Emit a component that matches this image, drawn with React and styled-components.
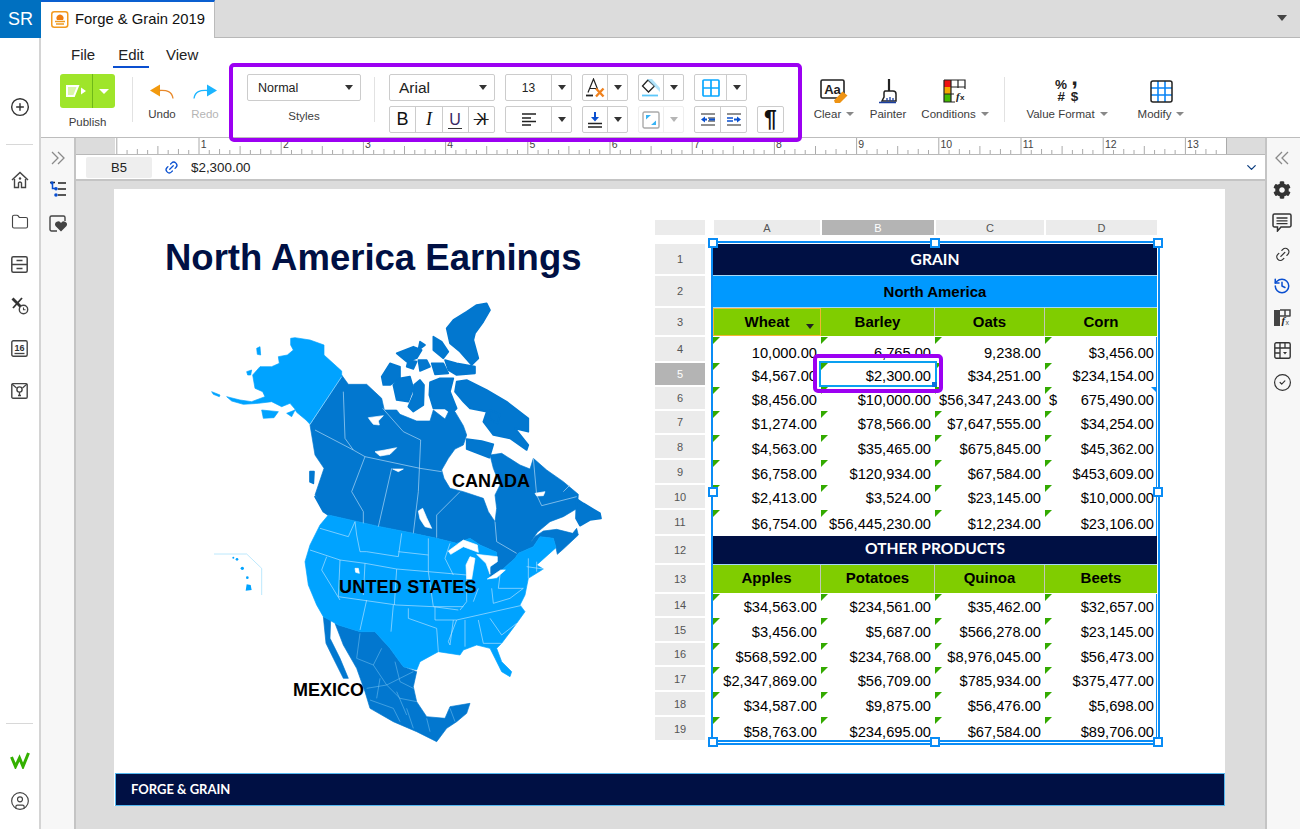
import React from "react";
import styled, { createGlobalStyle } from "styled-components";
import { FaCog } from "react-icons/fa";
import { History, CircleCheck, CircleUser, Link2, CirclePlus, Folder, ChevronDown } from "lucide-react";

const Global = createGlobalStyle`
  html, body { margin: 0; padding: 0; background: #fff; }
  body { font-family: "Liberation Sans", Arial, sans-serif; color: #222; overflow: hidden; }
  * { box-sizing: border-box; }
  svg { display: block; }
`;

const Shell = styled.div`display: flex; width: 1300px; height: 829px; overflow: hidden;`;
const Rail = styled.aside`width: 41px; flex: none; display: flex; flex-direction: column; background: #fff; border-right: 2px solid #d4d4d4;`;
const Brand = styled.div`height: 38px; width: 41px; background: #0070c0; color: #fff; font-size: 18px; display: flex; align-items: center; justify-content: center;`;
const RailButton = styled.div`height: ${p => p.$h || 42}px; margin-top: ${p => p.$mt || 0}px; display: flex; align-items: center; justify-content: center; color: #444;`;
const RailRule = styled.div`height: 1px; background: #d8d8d8; margin: ${p => p.$m}; `;
const RailFoot = styled.div`margin-top: auto; padding-bottom: 8px;`;

const Main = styled.div`flex: 1; min-width: 0; display: flex; flex-direction: column;`;
const TabBar = styled.div`height: 38px; flex: none; background: #dcdcdc; border-bottom: 1px solid #b8b8b8; display: flex; align-items: flex-start; justify-content: space-between; padding-right: 13px;`;
const Tab = styled.div`width: 174px; height: 38px; background: #fff; border-top: 2px solid #0a5fd0; border-right: 1px solid #bbb; display: flex; align-items: center; gap: 6px; padding: 0 0 2px 10px; font-size: 14.8px; color: #111; white-space: nowrap;`;
const TabCaret = styled.div`margin-top: 15px; width: 0; height: 0; border-left: 5.5px solid transparent; border-right: 5.5px solid transparent; border-top: 6px solid #444;`;

const Toolbar = styled.div`position: relative; height: 100px; flex: none; background: #fff; border-bottom: 1px solid #bdbdbd; z-index: 3;`;
const MenuRow = styled.nav`height: 36px; display: flex; padding: 8px 0 0 25px; font-size: 15px; color: #222;`;
const MenuItem = styled.div`height: 22px; line-height: 18px; padding: 0 5px; margin-right: ${p => p.$mr}px; border-bottom: ${p => (p.$on ? "2px solid #0a4fd0" : "2px solid transparent")};`;
const Ribbon = styled.div`display: flex; align-items: flex-start; padding-left: 19px;`;
const PublishCol = styled.div`width: 55px; display: flex; flex-direction: column; align-items: center;`;
const PublishBtn = styled.div`width: 55px; height: 34px; border-radius: 3px; background: #9fe52a; display: flex;`;
const PublishMain = styled.div`width: 33px; border-right: 1px solid #6fb818; display: flex; align-items: center; justify-content: center;`;
const PublishDrop = styled.div`flex: 1; display: flex; align-items: center; justify-content: center;`;
const WhiteCaret = styled.span`width: 0; height: 0; border-left: 5px solid transparent; border-right: 5px solid transparent; border-top: 5px solid #fff;`;
const RibbonLabel = styled.div`font-size: 11.5px; line-height: 14px; color: ${p => p.$off ? "#b5b5b5" : "#3c3c3c"}; margin-top: ${p => p.$mt ?? 3}px; white-space: nowrap; display: flex; align-items: center; gap: 5px;`;
const Divider = styled.div`width: 1px; height: 45px; background: #e2e2e2; margin: 3px 0 0 ${p => p.$ml}px;`;
const RibbonItem = styled.div`width: ${p => p.$w}px; margin-left: ${p => p.$ml}px; padding-top: 4px; display: flex; flex-direction: column; align-items: center;`;
const IconBox = styled.div`height: 26px; display: flex; align-items: center; justify-content: center;`;
const GrayCaret = styled.span`width: 0; height: 0; border-left: 4.5px solid transparent; border-right: 4.5px solid transparent; border-top: 4.5px solid #888;`;
const StylesCol = styled.div`width: 114px; margin-left: 21px; display: flex; flex-direction: column; align-items: center;`;
const Select = styled.div`width: ${p => p.$w}px; height: 27px; border: 1px solid #ccc; border-radius: 2px; background: #fff; display: flex; align-items: center; justify-content: space-between; padding: 0 7px 0 ${p => p.$pl}px; font-size: ${p => p.$fs}px; color: #222;`;
const DarkCaret = styled.span`width: 0; height: 0; border-left: 4.5px solid transparent; border-right: 4.5px solid transparent; border-top: 5px solid ${p => p.$off ? "#b5b5b5" : "#333"};`;
const FormatCluster = styled.div`margin-left: 14px; display: flex; gap: 10px;`;
const FormatCol = styled.div`width: ${p => p.$w}px; display: flex; flex-direction: column; gap: 5px; justify-content: flex-end; height: 59px;`;
const Split = styled.div`height: 27px; display: flex; border: 1px solid ${p => p.$off ? "#eee" : "#ccc"}; border-radius: 2px; background: #fff;`;
const SplitMain = styled.div`flex: 1; display: flex; align-items: center; justify-content: center; font-size: 12px; color: #222;`;
const SplitDrop = styled.div`width: 20px; flex: none; border-left: 1px solid ${p => p.$off ? "#eee" : "#ccc"}; display: flex; align-items: center; justify-content: center;`;
const Cell = styled.div`flex: 1; display: flex; align-items: center; justify-content: center; color: #111; font-size: ${p => p.$fs || 18}px; font-family: ${p => p.$serif ? '"Liberation Serif", serif' : "inherit"}; font-style: ${p => p.$it ? "italic" : "normal"}; & + & { border-left: 1px solid #ccc; }`;
const UnderU = styled.span`font-size: 16px; line-height: 17px; border-bottom: 1.5px solid #333; color: #3a2a66; padding: 0 1px; `;
const StrikeK = styled.span`position: relative; font-size: 16px; line-height: 17px; transform: scaleX(-1); &::after { content: ""; position: absolute; left: -2px; right: -2px; top: 8px; height: 1px; background: #222; }`;
const Pilcrow = styled.div`height: 27px; border: 1px solid #ccc; border-radius: 2px; display: flex; align-items: center; justify-content: center; font-size: 23px; font-weight: 700; color: #111;`;
const FormatGlyphs = styled.div`display: grid; grid-template-columns: 15px 12px; line-height: 12.500px; font-size: 13.500px; font-weight: 700; color: #222; text-align: center;`;
const ThickComma = styled.span`font-size: 24px; line-height: 12px; font-weight: 700; transform: translateY(-8px);`;
const ItalicHash = styled.span`font-style: italic;`;
const Highlight = styled.div`position: absolute; left: 188px; top: 25px; width: 573px; height: 79px; border: 4px solid #9c00f2; border-radius: 5px; pointer-events: none;`;

const Work = styled.div`flex: 1; min-height: 0; display: flex;`;
const LeftPane = styled.div`width: 35px; flex: none; background: #f7f7f7; border-right: 2px solid #c4c4c4; display: flex; flex-direction: column; align-items: center; padding-top: 12px; color: #888;`;
const PaneIcon = styled.div`margin-top: ${p => p.$mt}px; height: ${p => p.$h}px; display: flex; align-items: center; justify-content: center;`;
const Center = styled.div`flex: 1; min-width: 0; display: flex; flex-direction: column;`;
const RulerRow = styled.div`height: 17px; flex: none; display: flex; background: #dcdcdc; border-bottom: 1px solid #b8b8b8;`;
const RulerGap = styled.div`width: 39px; flex: none;`;
const FormulaBar = styled.div`height: 26px; flex: none; background: #fff; border-bottom: 2px solid #c4c4c4; display: flex; align-items: center; padding: 1px 5px 0 10px; font-size: 13.4px; color: #222;`;
const CellRef = styled.div`width: 66px; height: 21px; background: #eee; border-radius: 2px; display: flex; align-items: center; justify-content: center; font-size: 13px;`;
const LinkWrap = styled.div`margin: 0 12px 0 12px; color: #0a50d0; transform: rotate(-45deg);`;
const FormulaEnd = styled.div`margin-left: auto; color: #0a3d80; margin-right: 1px;`;
const Canvas = styled.div`flex: 1; min-height: 0; background: #dcdcdc; padding: 8px 40px 23px 38px; display: flex;`;
const Page = styled.div`flex: 1; background: #fff; display: flex; flex-direction: column;`;
const PageBody = styled.div`flex: 1; min-height: 0; display: flex;`;
const MapCol = styled.div`width: 541px; flex: none;`;
const Title = styled.h1`margin: 49px 0 17px 51px; font-size: 36.5px; line-height: 40px; font-weight: 700; color: #001044; white-space: nowrap;`;
const MapBox = styled.div`position: relative; width: 420px; height: 450px; margin-left: 86px;`;
const MapLabel = styled.div`position: absolute; left: ${p => p.$x}px; top: ${p => p.$y}px; font-size: 18px; line-height: 20px; font-weight: 700; color: #000; white-space: nowrap; letter-spacing: ${p => p.$ls || 0}px;`;
const Sheet = styled.div`position: relative; margin-top: 31px; width: 510px; height: fit-content;`;
const ColHeads = styled.div`display: flex; margin-bottom: 9px; height: 15px;`;
const Corner = styled.div`width: 50px; background: #ebebeb; margin-right: 9px;`;
const ColHead = styled.div`width: ${p => p.$w}px; margin-right: 2px; background: ${p => p.$on ? "#b4b4b4" : "#ebebeb"}; color: ${p => p.$on ? "#fff" : "#555"}; font-size: 11px; line-height: 17px; text-align: center;`;
const Row = styled.div`display: flex; height: ${p => p.$h}px;`;
const RowHead = styled.div`width: 50px; flex: none; margin: 0 8px 2px 0; background: ${p => p.$on ? "#b4b4b4" : "#ebebeb"}; color: ${p => p.$on ? "#fff" : "#555"}; font-size: 11px; display: flex; align-items: center; justify-content: center;`;
const Band = styled.div`width: 444px; height: 100%; background: ${p => p.$bg}; color: ${p => p.$fg}; border-bottom: 1px solid #a6d8f5; padding-bottom: ${p => p.$pb || 0}px; display: flex; align-items: center; justify-content: center; font-family: ${p => p.$lato ? 'Lato, sans-serif' : 'inherit'}; font-weight: 700; font-size: ${p => p.$lato ? 15.6 : 15}px;`;
const widths = [108, 114, 110, 112];
const HeadCell = styled.div`position: relative; width: ${p => p.$w}px; height: calc(100% - 1px); background: #80cd00; border-right: 1px solid #c2c8b4; border: ${p => p.$sel ? "1.5px solid #f2b632" : ""}; padding-bottom: ${p => p.$pb}px; font-size: 15px; font-weight: 700; color: #000; display: flex; align-items: center; justify-content: center; &:last-child { border-right: none; }`;
const HeadCaret = styled.span`position: absolute; right: 6px; bottom: 6px; width: 0; height: 0; border-left: 4.5px solid transparent; border-right: 4.5px solid transparent; border-top: 5px solid #222;`;
const DataCell = styled.div`position: relative; width: ${p => p.$w}px; padding: ${p => p.$pt}px 4px 0 4px; font-size: 14.67px; color: #000; white-space: nowrap; display: flex; align-items: center; justify-content: ${p => p.$acct ? "space-between" : "flex-end"}; border-bottom: ${p => p.$last ? "2px solid #0a8cf5" : "none"};
  &::before { content: ""; position: absolute; left: 0; top: 0; width: 0; height: 0; border-top: 7px solid #33aa00; border-right: 7px solid transparent; z-index: 1; }
  &:first-of-type { box-shadow: inset 2px 0 0 #fff, inset 3px 0 0 #0a8cf5; }
  &:last-of-type { box-shadow: inset -1px 0 0 #0a8cf5; padding-right: 3px; }
`;
const CornerMark = styled.span`position: absolute; right: 1px; top: 0; width: 0; height: 0; border-top: 5px solid #0a8cf5; border-left: 5px solid transparent;`;
const Frame = styled.div`position: absolute; left: 56px; top: 21px; width: 449px; height: 504px; border: 2px solid #0a8cf5; pointer-events: none; z-index: 2;`;
const Handle = styled.span`position: absolute; left: ${p => p.$x}px; top: ${p => p.$y}px; width: 10px; height: 10px; background: #fff; border: 2px solid #0a8cf5;`;
const CellSelect = styled.div`position: absolute; left: 164px; top: 141px; width: 118px; height: 26px; border: 2px solid #0aa0f0; z-index: 2; pointer-events: none;`;
const FillDot = styled.span`position: absolute; right: -2px; bottom: -2px; width: 5px; height: 5px; background: #0a6fe0;`;
const CellPurple = styled.div`position: absolute; left: 158px; top: 134px; width: 130px; height: 39px; border: 4px solid #9c00f2; border-radius: 5px; z-index: 3; pointer-events: none;`;
const PageFooter = styled.footer`height: 33px; flex: none; margin-left: 1px; background: #001044; border: 1px solid #55b8f0; color: #fff; font-family: Lato, sans-serif; font-weight: 700; font-size: 13px; display: flex; align-items: center; padding: 0 0 1px 15px;`;
const RightPane = styled.div`width: 35px; flex: none; background: #f7f7f7; border-left: 2px solid #c4c4c4; padding: 4px 3px 0 0; display: flex; flex-direction: column; align-items: center; color: #333;`;
const RightIcon = styled.div`height: 32px; display: flex; align-items: center; justify-content: center;`;
const TiltedIcon = styled(RightIcon)`transform: rotate(-45deg);`;
const Arrow = styled.svg``;

/* ---------- icons ---------- */
const S = "#444";
const Ic = ({ w = 20, h = 20, vb, children }) => <Arrow width={w} height={h} viewBox={vb || `0 0 ${w} ${h}`} fill="none">{children}</Arrow>;

const TabIcon = () => (<Ic w={18} h={17}><rect x=".75" y=".75" width="16" height="15.5" rx="2.5" stroke="#f39a1e" strokeWidth="1.5" fill="#fff" /><path d="M6 9a3.5 3.5 0 1 1 6 0z" fill="#ef7c10" /><path d="M4 10.5h10M5 13h8" stroke="#ef9a20" strokeWidth="1.6" /></Ic>);
const Home = () => (<Ic w={18} h={18}><path d="M1 9 9 1.5 17 9" stroke={S} strokeWidth="1.5" /><path d="M3.5 8v8.5h4V12a1.6 1.6 0 0 1 3 0v4.5h4V8" stroke={S} strokeWidth="1.4" /><circle cx="9" cy="7.5" r="1.2" fill={S} /></Ic>);
const Drawer = () => (<Ic w={17} h={17}><rect x=".8" y=".8" width="15.4" height="15.4" rx="1.5" stroke={S} strokeWidth="1.5" /><path d="M1 8.5h15M5.5 4.6h6M5.5 12.4h6" stroke={S} strokeWidth="1.5" /></Ic>);
const Tasks = () => (<Ic w={18} h={18}><path d="M1.500 1.500 10 10" stroke="#333" strokeWidth="2.800" /><path d="M11 1 2 11" stroke="#333" strokeWidth="1.800" /><circle cx="12.500" cy="12.500" r="4.200" fill="#fff" stroke={S} strokeWidth="1.400" /><path d="M12.500 10.500v2.300h2" stroke={S} strokeWidth="1.100" /></Ic>);
const Calendar = () => (<Ic w={17} h={17}><rect x=".8" y=".8" width="15.4" height="15.4" rx="1.5" stroke={S} strokeWidth="1.4" /><path d="M3.5 13.5h10" stroke={S} strokeWidth="1.3" /><text x="8.5" y="10.8" textAnchor="middle" fontSize="9" fontWeight="700" fill="#333" fontFamily="Liberation Sans">16</text></Ic>);
const Idea = () => (<Ic w={17} h={17}><rect x=".8" y="1.6" width="15.4" height="14.6" rx="1.2" stroke={S} strokeWidth="1.4" /><path d="M1 2 5.5 6M16 2l-4.500 4" stroke={S} strokeWidth="1.2" /><circle cx="8.500" cy="7.500" r="2.600" stroke={S} strokeWidth="1.400" /><path d="M8.500 10v4M7 13.500h3" stroke={S} strokeWidth="1.300" /></Ic>);
const WLogo = () => (<Ic w={20} h={18}><path d="M1.500 6 5.500 15.500 9.500 7 13 15.500 18.500 2" stroke="#33b000" strokeWidth="3" strokeLinejoin="miter" /></Ic>);
const Tree = () => (<Ic w={18} h={16}><path d="M1 1.500h5M9 2h8M9 8h8M9 14h8" stroke="#222" strokeWidth="1.700" /><path d="M3.500 1.500v6h3.500" stroke="#0a4fd0" strokeWidth="1.500" /><circle cx="7" cy="7.800" r="1.800" fill="#0a4fd0" /><circle cx="7" cy="14" r="1.800" fill="#0a4fd0" /><circle cx="3" cy="1.800" r="1.600" fill="#0a4fd0" /></Ic>);
const HeartBox = () => (<Ic w={18} h={17}><path d="M8 16H2.500A1.500 1.500 0 0 1 1 14.500V2.500A1.500 1.500 0 0 1 2.500 1h12A1.500 1.500 0 0 1 16 2.500V6" stroke={S} strokeWidth="1.400" /><path d="M12 16.500 6.500 11A3 3 0 0 1 12 8a3 3 0 0 1 5.500 3z" fill="#444" /></Ic>);
const DoubleChevron = ({ left }) => (<Ic w={14} h={14}><path d={left ? "M7 1 1 7l6 6M13 1 7 7l6 6" : "M1 1l6 6-6 6M7 1l6 6-6 6"} stroke="#8a8a8a" strokeWidth="1.300" /></Ic>);
const PublishIcon = () => (<Ic w={20} h={12}><path d="M1 1h11L8 11H1z" fill="#d9f7a8" stroke="#fff" strokeWidth="2" /><path d="M13 6h2V2.500L20 6l-5 3.500V6" fill="#fff" /></Ic>);
const Undo = () => (<Ic w={24} h={15}><path d="M0 6.500 10 .5v12z" fill="#f29a0e" /><path d="M9 6.500c8-.6 13 .8 14 8" stroke="#e8892a" strokeWidth="1.300" /></Ic>);
const Redo = () => (<Ic w={24} h={15}><path d="M24 6.500 14 .5v12z" fill="#1cb5ff" /><path d="M15 6.500c-8-.6-13 .8-14 8" stroke="#1cb5ff" strokeWidth="1.300" /></Ic>);
const ClearIcon = () => (<Ic w={28} h={25}><rect x="1" y="1" width="23" height="18" rx="1.500" stroke="#222" strokeWidth="1.600" /><text x="12.500" y="15" textAnchor="middle" fontSize="13" fontWeight="700" fill="#222" fontFamily="Liberation Sans">Aa</text><path d="M14 21.500 22.500 12.500 27.500 16.500 20 24H15z" fill="#ee9313" /></Ic>);
const PainterIcon = () => (<Ic w={20} h={26}><path d="M11 1v12" stroke="#222" strokeWidth="2.200" /><path d="M7 13h8a3 3 0 0 1 3 3v7H4l2-4v-4a2 2 0 0 1 1-2z" stroke="#222" strokeWidth="1.500" /><path d="M1 24.500h17M9 23v-3M12 23v-4M15 23v-3" stroke="#1a3ea0" strokeWidth="1.300" /></Ic>);
const ConditionsIcon = () => (<Ic w={24} h={24}><rect x="1" y="1" width="7" height="7" fill="#ee1111" /><rect x="1" y="8" width="7" height="7" fill="#f5a800" /><rect x="1" y="15" width="7" height="8" fill="#44bb00" /><path d="M1 1h21v9M1 1v22h11M8 1v22M15 1v8M8 8h14M1 15h10" stroke="#222" strokeWidth="1.200" /><text x="13" y="21" fontSize="11" fontStyle="italic" fontWeight="700" fill="#222" fontFamily="Liberation Serif">f</text><text x="17" y="21" fontSize="8" fontWeight="700" fill="#222" fontFamily="Liberation Sans">x</text></Ic>);
const ModifyIcon = () => (<Ic w={23} h={23}><path d="M1 8h21M1 15h21M8 1v21M15 1v21" stroke="#0a84f5" strokeWidth="1.600" /><rect x="1" y="1" width="21" height="21" rx="2" stroke="#222" strokeWidth="1.500" /></Ic>);
const ClearFmt = () => (<Ic w={20} h={20}><path d="M3 14.500 8.500 1l4 10" stroke="#222" strokeWidth="1.200" /><path d="M1 17.500h7" stroke="#222" strokeWidth="1.800" /><path d="M5 10.500h6" stroke="#222" strokeWidth="1" /><path d="M11 10.500l7.500 8M18.500 10.500l-7.500 8" stroke="#f0821e" strokeWidth="2.400" /></Ic>);
const FillIcon = () => (<Ic w={20} h={20}><path d="M7 2 1.500 8 7.500 14 13.500 8z" stroke="#222" strokeWidth="1.300" /><path d="M6 1l5 0 8 9v4l-5-5z" fill="#9edcf9" opacity=".8" /><path d="M1 17.500h16" stroke="#5cc7fa" strokeWidth="1.800" /></Ic>);
const GridBlue = () => (<Ic w={18} h={18}><rect x="1" y="1" width="16" height="16" rx="1" stroke="#0aa8ff" strokeWidth="1.700" /><path d="M9 1v16M1 9h16" stroke="#0aa8ff" strokeWidth="1.700" /></Ic>);
const AlignIcon = () => (<Ic w={16} h={13}><path d="M1 1h14M1 5h9M1 8.500h14M1 12h9" stroke="#222" strokeWidth="1.300" /></Ic>);
const ValignIcon = () => (<Ic w={16} h={16}><path d="M8 0v5.500" stroke="#0a50d0" strokeWidth="2" /><path d="M4 5h8L8 9.500z" fill="#0a50d0" /><path d="M1 11.500h14M1 15h14" stroke="#222" strokeWidth="1.300" /></Ic>);
const MergeOff = () => (<Ic w={18} h={18}><rect x="1" y="1" width="16" height="16" rx="1.500" stroke="#aaa" strokeWidth="1.400" /><path d="M4 4h5L4 8.500zM14 14H9l5-4.500z" fill="#39b4f5" /></Ic>);
const IndentL = () => (<Ic w={16} h={13}><path d="M1 1h14M1 12h14M8 5h7M8 8h7" stroke="#222" strokeWidth="1.200" /><path d="M1 6.500 5 3.500v6z" fill="#0a50d0" /><path d="M4 6.500h3M9 6.500h6" stroke="#0a50d0" strokeWidth="2" /></Ic>);
const IndentR = () => (<Ic w={16} h={13}><path d="M1 1h14M1 12h14" stroke="#222" strokeWidth="1.200" /><path d="M1 5h6M1 8h6" stroke="#0a50d0" strokeWidth="1.300" /><path d="M15 6.500 11 3.500v6z" fill="#0a50d0" /><path d="M8 6.500h4" stroke="#0a50d0" strokeWidth="2" /></Ic>);
const CommentIcon = () => (<Ic w={20} h={19}><path d="M2.500 1h15A1.500 1.500 0 0 1 19 2.500v10a1.500 1.500 0 0 1-1.500 1.500H9l-3.500 4v-4h-3A1.500 1.500 0 0 1 1 12.500v-10A1.500 1.500 0 0 1 2.500 1z" stroke="#333" strokeWidth="1.500" /><path d="M4.500 5h11M4.500 7.800h11M4.500 10.600h11" stroke="#333" strokeWidth="1.300" /></Ic>);
const FxTable = () => (<Ic w={18} h={18}><path d="M1 1h6v16H1z" fill="#444" /><path d="M7 1h10v6.500M7 7h10M12 1v6" stroke="#444" strokeWidth="1.500" /><text x="8.500" y="15" fontSize="11" fontStyle="italic" fontWeight="700" fill="#222" fontFamily="Liberation Serif">f</text><text x="12.500" y="16" fontSize="7" fill="#555" fontFamily="Liberation Sans">x</text></Ic>);
const TableIcon = () => (<Ic w={17} h={17}><rect x=".8" y=".8" width="15.400" height="15.400" rx="1.500" stroke="#333" strokeWidth="1.400" /><path d="M1 6h15M1 11h5M6 1v15M11 1v5" stroke="#333" strokeWidth="1.300" /><path d="M9 10h4l-2 2.500z" fill="#333" /></Ic>);

/* ---------- map (coordinates traced at 3x) ---------- */
const DARK = "#0277cf";
const LIGHT = "#00a3ff";
const canada = "425,240 445,268 500,268 545,310 553,345 590,345 600,358 650,378 690,378 700,345 735,372 748,345 765,350 790,392 800,420 790,450 765,462 745,490 725,525 732,550 750,580 790,590 850,610 865,650 885,680 890,640 885,600 900,570 880,520 870,480 905,475 960,510 990,522 1000,490 1040,525 1090,560 1135,598 1132,640 1090,665 1050,680 1012,712 990,745 1005,725 1030,708 1070,703 1118,715 1130,700 1135,720 1090,762 1072,778 1068,758 1060,730 1020,725 1000,755 955,775 945,790 900,830 870,850 865,825 890,790 890,772 840,750 810,730 770,745 710,730 640,715 540,695 385,660 360,620 345,600 372,520 345,480 330,390";
const alaska = "272,130 285,128 330,135 372,150 372,180 425,228 425,245 330,388 318,375 290,352 283,340 270,325 245,335 215,320 175,325 130,328 95,318 80,305 120,315 155,320 195,305 188,290 165,280 158,240 180,215 215,215 238,205 235,185 262,180 280,165 272,150";
const usa = "385,660 540,695 640,715 710,730 770,745 810,730 840,750 890,772 890,790 865,825 870,850 900,830 945,790 955,775 1000,755 1020,725 1060,730 1068,758 1010,810 1030,822 985,850 975,900 960,930 975,950 950,985 905,1045 890,1060 905,1100 935,1130 930,1145 905,1130 885,1090 870,1060 830,1050 790,1065 780,1080 715,1070 660,1100 650,1125 610,1115 570,1060 525,1010 480,1010 415,990 370,965 350,930 325,870 315,800 330,750 360,690";
const mexico = "405,985 415,990 480,1010 525,1010 570,1060 610,1115 650,1130 640,1175 650,1220 680,1265 735,1270 750,1235 810,1225 800,1255 770,1280 740,1300 710,1340 650,1310 580,1280 510,1240 495,1190 470,1120 430,1050";
const baja = "370,965 392,975 390,1030 420,1090 445,1150 430,1150 400,1090 378,1045";
const arctic = [
  "740,100 760,75 800,50 830,30 860,25 870,45 850,80 825,115 820,135 835,190 815,210 780,170 750,145",
  "735,195 770,205 825,215 825,235 770,240 745,225",
  "765,290 770,260 800,255 860,285 920,320 985,370 985,410 945,400 985,450 980,465 930,430 880,420 850,380 860,350 810,340 790,320",
  "545,245 570,205 600,215 600,250 570,270 550,270",
  "580,270 600,250 630,245 640,280 625,320 590,315",
  "642,270 660,255 672,270 670,330 640,350 625,335 640,300",
  "690,262 720,250 760,250 750,290 770,340 755,355 735,340 700,340 688,300",
  "590,175 640,155 665,165 650,190 620,200",
  "625,195 650,200 640,222 620,215",
  "655,195 680,195 690,215 660,228",
  "695,205 730,205 745,235 705,238",
  "700,125 725,140 745,170 730,190 700,165",
  "660,140 675,150 655,165",
  "800,432 845,438 880,448 868,488 825,472 800,462",
  "870,345 900,358 892,385 868,372",
  "1130,612 1150,625 1200,655 1203,670 1170,675 1140,692 1128,670",
  "345,605 365,625 388,662 370,650",
  "330,530 342,530 340,565 330,560",
];
const alaskaIs = ["140,230 155,225 152,240 143,240", "170,160 180,155 182,180 172,178", "185,345 235,350 222,368 190,370", "35,290 60,300 58,305 40,298", "260,355 285,345 275,365"];
const lakes = [
  "505,368 550,362 535,378 538,390 520,388 512,378",
  "525,470 555,465 590,458 570,478 540,483",
  "578,522 610,522 595,530",
  "655,648 668,640 680,668 695,700 675,695 660,672",
  "745,768 790,735 832,750 835,772 790,755 752,778",
  "800,852 798,810 810,785 825,790 815,852",
  "830,778 892,785 892,800 870,815 870,838 858,805",
  "862,852 902,825 916,825 890,848",
  "1005,595 1035,590 1030,602 1010,603",
  "465,820 475,820 478,835 467,832",
];
const lines = [
  "425,245 330,388", "430,290 435,430 460,465", "345,405 460,465 495,485 660,520 725,530", "548,340 610,410 662,435 655,590 640,715",
  "495,485 455,590 490,650 490,685", "575,520 535,695", "780,590 710,660 710,728", "885,680 890,740 950,775", "1000,490 1010,600 1025,632 1130,605", "1090,590 1110,570",
  "360,700 445,725", "330,765 420,795", "445,725 465,680 470,720 480,770 500,770", "380,785 365,825 420,915", "420,795 495,805 590,822 685,830 800,840",
  "500,770 595,785", "595,785 605,715", "595,770 685,780", "685,730 685,830", "495,805 490,900", "415,905 590,930 700,935 775,945", "590,822 583,930",
  "500,915 480,1005", "580,930 573,1010", "625,940 625,970 710,1000 715,1070", "705,935 705,975 770,975 745,1040 750,1050", "685,830 700,935 790,935",
  "800,840 800,920 780,945", "770,975 970,930", "760,975 750,1050", "795,975 795,1055", "835,975 850,1045 905,1045", "870,970 905,1020 950,985",
  "900,840 895,880 970,880", "985,790 985,850", "1010,800 1010,830", "875,880 880,925", "835,880 820,920", "970,880 930,910 880,925", "420,795 415,905", "980,815 1030,822",
  "750,745 735,790 760,840",
];
const mxLines = ["480,1015 470,1090 520,1110 545,1060", "520,1110 560,1170 640,1130", "585,1100 600,1160 640,1180", "500,1180 560,1170 600,1210 650,1220", "510,1215 580,1240 600,1280", "620,1240 640,1300", "680,1270 690,1310", "750,1240 765,1280", "540,1150 530,1210", "590,1190 620,1260"];

const NorthAmerica = () => (
  <svg width="420" height="450" viewBox="0 0 1260 1350">
    <g strokeLinejoin="round" strokeWidth="2">
      <polygon points={canada} fill={DARK} stroke={DARK} />
      {arctic.map(p => <polygon key={p} points={p} fill={DARK} stroke={DARK} strokeWidth="5" />)}
      <polygon points={mexico} fill={DARK} stroke={DARK} />
      <polygon points={baja} fill={DARK} stroke={DARK} />
      <polygon points={usa} fill={LIGHT} stroke={LIGHT} />
      {alaskaIs.map(p => <polygon key={p} points={p} fill={LIGHT} stroke={LIGHT} />)}
      <polygon points={alaska} fill={LIGHT} stroke={LIGHT} />
      {lakes.map(p => <polygon key={p} points={p} fill="#fff" stroke="#fff" />)}
    </g>
    <g fill="none" stroke="#d6efff" strokeWidth="2" opacity=".85">
      {lines.map(p => <polyline key={p} points={p} />)}
    </g>
    <g fill="none" stroke="#7cc6f2" strokeWidth="1.500">
      {mxLines.map(p => <polyline key={p} points={p} />)}
    </g>
    <polyline points="42,777 140,777 185,820 185,900" fill="none" stroke="#9bdcfb" strokeWidth="2" />
    <g fill={LIGHT}>
      <circle cx="100" cy="788" r="3" /><circle cx="111" cy="793" r="4" /><circle cx="127" cy="820" r="5" />
      <circle cx="142" cy="848" r="4" /><polygon points="140,868 152,870 155,885 137,887" />
    </g>
  </svg>
);

/* ---------- ruler ---------- */
const RulerSvg = () => {
  const ticks = [];
  for (let i = 0; i <= 110; i++) {
    const x = 1.8 + i * 10.275;
    const h = i % 8 === 0 ? 16 : i % 4 === 0 ? 8 : i % 2 === 0 ? 5 : 4;
    if (x < 1110) ticks.push(<line key={i} x1={x} x2={x} y1={16 - h} y2={16} stroke="#aaa" strokeWidth="1" />);
  }
  const nums = Array.from({ length: 13 }, (_, i) => i + 1);
  return (
    <svg width="1112" height="16">
      <rect width="1112" height="16" fill="#fff" />
      {ticks}
      {nums.map(n => <text key={n} x={3.500 + n * 82.2} y="10" fontSize="10.500" fill="#444" fontFamily="Liberation Sans">{n}</text>)}
      <rect x="1111" width="1" height="16" fill="#aaa" />
    </svg>
  );
};

/* ---------- data ---------- */
const heights = { 1: 32, 2: 32, 3: 29, 4: 26, 5: 24, 6: 24, 7: 24, 8: 25, 9: 25, 10: 25, 11: 26, 12: 29, 13: 29, 14: 24, 15: 25, 16: 24, 17: 25, 18: 25, 19: 25 };
const textPad = { 4: 5, 8: 3, 9: 3, 15: 3, 16: 3, 17: 3, 18: 3, 19: 7 };
const dataA = [
  [4, "10,000.00", "6,765.00", "9,238.00", "$3,456.00"],
  [5, "$4,567.00", "$2,300.00", "$34,251.00", "$234,154.00"],
  [6, "$8,456.00", "$10,000.00", "$56,347,243.00", "675,490.00"],
  [7, "$1,274.00", "$78,566.00", "$7,647,555.00", "$34,254.00"],
  [8, "$4,563.00", "$35,465.00", "$675,845.00", "$45,362.00"],
  [9, "$6,758.00", "$120,934.00", "$67,584.00", "$453,609.00"],
  [10, "$2,413.00", "$3,524.00", "$23,145.00", "$10,000.00"],
  [11, "$6,754.00", "$56,445,230.00", "$12,234.00", "$23,106.00"],
];
const dataB = [
  [14, "$34,563.00", "$234,561.00", "$35,462.00", "$32,657.00"],
  [15, "$3,456.00", "$5,687.00", "$566,278.00", "$23,145.00"],
  [16, "$568,592.00", "$234,768.00", "$8,976,045.00", "$56,473.00"],
  [17, "$2,347,869.00", "$56,709.00", "$785,934.00", "$375,477.00"],
  [18, "$34,587.00", "$9,875.00", "$56,476.00", "$5,698.00"],
  [19, "$58,763.00", "$234,695.00", "$67,584.00", "$89,706.00"],
];

const DataRow = ({ r }) => {
  const n = r[0];
  return (
    <Row $h={heights[n]}>
      <RowHead $on={n === 5}>{n}</RowHead>
      {r.slice(1).map((v, i) => {
        const acct = n === 6 && i === 3;
        return (
          <DataCell key={i} $w={widths[i]} $acct={acct} $last={n === 19} $pt={textPad[n] ?? 1}>
            {acct && <span>$</span>}
            <span>{v}</span>
            {acct && <CornerMark />}
          </DataCell>
        );
      })}
    </Row>
  );
};

const HeadRow = ({ n, names, pb }) => (
  <Row $h={heights[n]}>
    <RowHead>{n}</RowHead>
    {names.map((t, i) => (
      <HeadCell key={t} $w={widths[i]} $sel={t === "Wheat"} $pb={pb}>
        {t}
        {t === "Wheat" && <HeadCaret />}
      </HeadCell>
    ))}
  </Row>
);

const handles = [[-5, -5], [217, -5], [440, -5], [-5, 244], [440, 244], [-5, 494], [217, 494], [440, 494]];

export default function App() {
  return (
    <Shell>
      <Global />
      <Rail>
        <Brand>SR</Brand>
        <RailButton $h={20} $mt={59}><CirclePlus size={20} strokeWidth={1.7} color="#333" /></RailButton>
        <RailRule $m="27px 6px 14px" />
        <RailButton><Home /></RailButton>
        <RailButton><Folder size={18} strokeWidth={1.5} color={S} /></RailButton>
        <RailButton><Drawer /></RailButton>
        <RailButton><Tasks /></RailButton>
        <RailButton><Calendar /></RailButton>
        <RailButton><Idea /></RailButton>
        <RailFoot>
          <RailRule $m="0 6px 15px" />
          <RailButton $h={41}><WLogo /></RailButton>
          <RailButton $h={41}><CircleUser size={20} strokeWidth={1.4} color={S} /></RailButton>
        </RailFoot>
      </Rail>
      <Main>
        <TabBar>
          <Tab><TabIcon />Forge &amp; Grain 2019</Tab>
          <TabCaret />
        </TabBar>
        <Toolbar>
          <MenuRow>
            <MenuItem $mr={13}>File</MenuItem>
            <MenuItem $mr={12} $on>Edit</MenuItem>
            <MenuItem>View</MenuItem>
          </MenuRow>
          <Ribbon>
            <PublishCol>
              <PublishBtn>
                <PublishMain><PublishIcon /></PublishMain>
                <PublishDrop><WhiteCaret /></PublishDrop>
              </PublishBtn>
              <RibbonLabel $mt={7}>Publish</RibbonLabel>
            </PublishCol>
            <Divider $ml={17} />
            <RibbonItem $w={42} $ml={8}><IconBox><Undo /></IconBox><RibbonLabel>Undo</RibbonLabel></RibbonItem>
            <RibbonItem $w={42} $ml={1}><IconBox><Redo /></IconBox><RibbonLabel $off>Redo</RibbonLabel></RibbonItem>
            <StylesCol>
              <Select $w={114} $pl={10} $fs={12.500}>Normal<DarkCaret /></Select>
              <RibbonLabel $mt={8}>Styles</RibbonLabel>
            </StylesCol>
            <Divider $ml={13} />
            <FormatCluster>
              <FormatCol $w={106}>
                <Select $w={106} $pl={9} $fs={15.500}>Arial<DarkCaret /></Select>
                <Split>
                  <Cell>B</Cell>
                  <Cell $serif $it>I</Cell>
                  <Cell><UnderU>U</UnderU></Cell>
                  <Cell><StrikeK>K</StrikeK></Cell>
                </Split>
              </FormatCol>
              <FormatCol $w={67}>
                <Split><SplitMain>13</SplitMain><SplitDrop><DarkCaret /></SplitDrop></Split>
                <Split><SplitMain><AlignIcon /></SplitMain><SplitDrop><DarkCaret /></SplitDrop></Split>
              </FormatCol>
              <FormatCol $w={46}>
                <Split><SplitMain><ClearFmt /></SplitMain><SplitDrop><DarkCaret /></SplitDrop></Split>
                <Split><SplitMain><ValignIcon /></SplitMain><SplitDrop><DarkCaret /></SplitDrop></Split>
              </FormatCol>
              <FormatCol $w={46}>
                <Split><SplitMain><FillIcon /></SplitMain><SplitDrop><DarkCaret /></SplitDrop></Split>
                <Split $off><SplitMain><MergeOff /></SplitMain><SplitDrop $off><DarkCaret $off /></SplitDrop></Split>
              </FormatCol>
              <FormatCol $w={53}>
                <Split><SplitMain><GridBlue /></SplitMain><SplitDrop><DarkCaret /></SplitDrop></Split>
                <Split><Cell><IndentL /></Cell><Cell><IndentR /></Cell></Split>
              </FormatCol>
              <FormatCol $w={27}>
                <Pilcrow>¶</Pilcrow>
              </FormatCol>
            </FormatCluster>
            <RibbonItem $w={42} $ml={29}><IconBox><ClearIcon /></IconBox><RibbonLabel>Clear<GrayCaret /></RibbonLabel></RibbonItem>
            <RibbonItem $w={40} $ml={13}><IconBox><PainterIcon /></IconBox><RibbonLabel>Painter</RibbonLabel></RibbonItem>
            <RibbonItem $w={68} $ml={13}><IconBox><ConditionsIcon /></IconBox><RibbonLabel>Conditions<GrayCaret /></RibbonLabel></RibbonItem>
            <Divider $ml={15} />
            <RibbonItem $w={82} $ml={21}>
              <IconBox>
                <FormatGlyphs><span>%</span><ThickComma>,</ThickComma><ItalicHash>#</ItalicHash><span>$</span></FormatGlyphs>
              </IconBox>
              <RibbonLabel>Value Format<GrayCaret /></RibbonLabel>
            </RibbonItem>
            <RibbonItem $w={48} $ml={29}><IconBox><ModifyIcon /></IconBox><RibbonLabel>Modify<GrayCaret /></RibbonLabel></RibbonItem>
          </Ribbon>
          <Highlight />
        </Toolbar>
        <Work>
          <LeftPane>
            <PaneIcon $mt={0} $h={16}><DoubleChevron /></PaneIcon>
            <PaneIcon $mt={14} $h={18}><Tree /></PaneIcon>
            <PaneIcon $mt={16} $h={18}><HeartBox /></PaneIcon>
          </LeftPane>
          <Center>
            <RulerRow>
              <RulerGap />
              <RulerSvg />
            </RulerRow>
            <FormulaBar>
              <CellRef>B5</CellRef>
              <LinkWrap><Link2 size={15} strokeWidth={2} /></LinkWrap>
              $2,300.00
              <FormulaEnd><ChevronDown size={15} strokeWidth={2} /></FormulaEnd>
            </FormulaBar>
            <Canvas>
              <Page>
                <PageBody>
                  <MapCol>
                    <Title>North America Earnings</Title>
                    <MapBox>
                      <NorthAmerica />
                      <MapLabel $x={252} $y={176}>CANADA</MapLabel>
                      <MapLabel $x={139} $y={282} $ls={0.2}>UNTED STATES</MapLabel>
                      <MapLabel $x={93} $y={385}>MEXICO</MapLabel>
                    </MapBox>
                  </MapCol>
                  <Sheet>
                    <ColHeads>
                      <Corner />
                      <ColHead $w={106}>A</ColHead>
                      <ColHead $w={112} $on>B</ColHead>
                      <ColHead $w={108}>C</ColHead>
                      <ColHead $w={111}>D</ColHead>
                    </ColHeads>
                    <Row $h={heights[1]}><RowHead>1</RowHead><Band $bg="#001044" $fg="#fff" $lato $pb={2}>GRAIN</Band></Row>
                    <Row $h={heights[2]}><RowHead>2</RowHead><Band $bg="#0099ff" $fg="#000" $pb={1}>North America</Band></Row>
                    <HeadRow n={3} pb={1} names={["Wheat", "Barley", "Oats", "Corn"]} />
                    {dataA.map(r => <DataRow key={r[0]} r={r} />)}
                    <Row $h={heights[12]}><RowHead>12</RowHead><Band $bg="#001044" $fg="#fff" $lato $pb={5}>OTHER PRODUCTS</Band></Row>
                    <HeadRow n={13} pb={3} names={["Apples", "Potatoes", "Quinoa", "Beets"]} />
                    {dataB.map(r => <DataRow key={r[0]} r={r} />)}
                    <Frame>
                      {handles.map(([x, y]) => <Handle key={`${x}-${y}`} $x={x} $y={y} />)}
                    </Frame>
                    <CellSelect><FillDot /></CellSelect>
                    <CellPurple />
                  </Sheet>
                </PageBody>
                <PageFooter>FORGE &amp; GRAIN</PageFooter>
              </Page>
            </Canvas>
          </Center>
          <RightPane>
            <RightIcon><DoubleChevron left /></RightIcon>
            <RightIcon><FaCog size={18} color="#333" /></RightIcon>
            <RightIcon><CommentIcon /></RightIcon>
            <TiltedIcon><Link2 size={17} strokeWidth={1.8} /></TiltedIcon>
            <RightIcon><History size={18} strokeWidth={2} color="#0a4fd0" /></RightIcon>
            <RightIcon><FxTable /></RightIcon>
            <RightIcon><TableIcon /></RightIcon>
            <RightIcon><CircleCheck size={19} strokeWidth={1.5} color="#333" /></RightIcon>
          </RightPane>
        </Work>
      </Main>
    </Shell>
  );
}
